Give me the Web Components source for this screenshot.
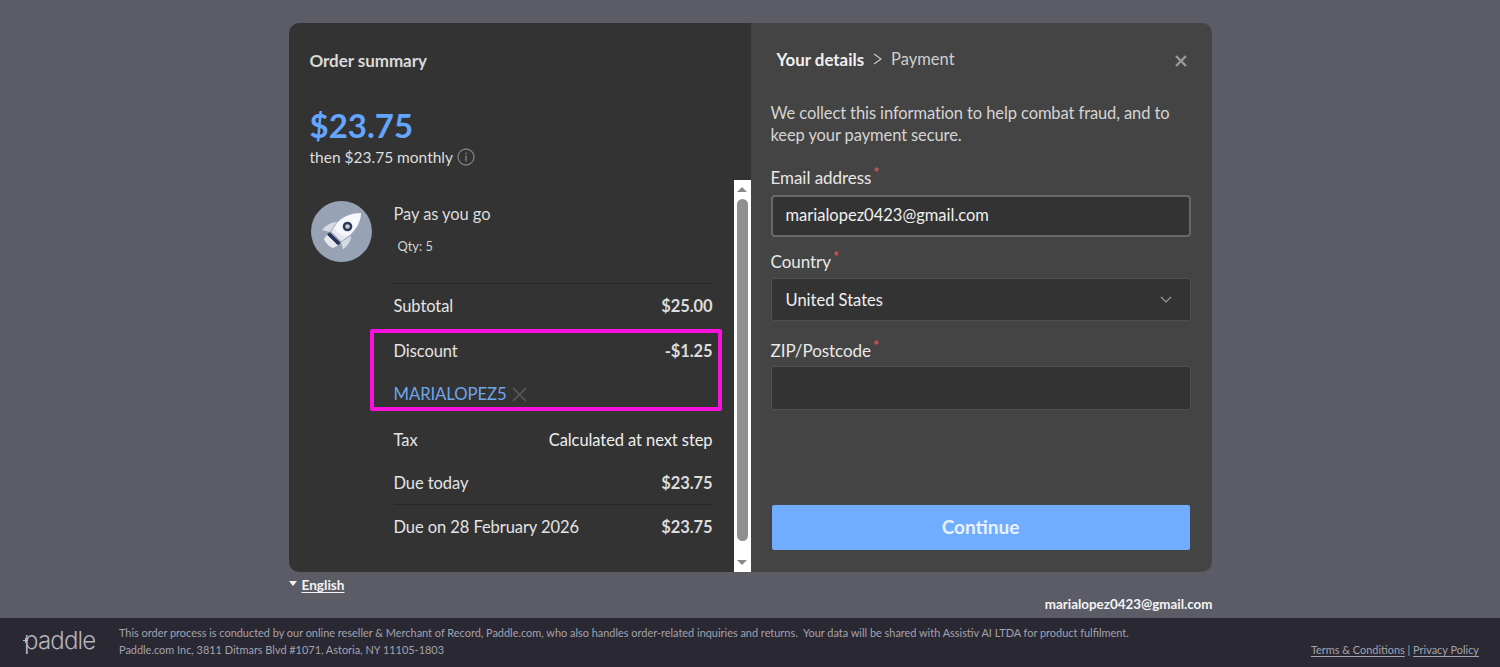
<!DOCTYPE html>
<html lang="en"><head><meta charset="utf-8"><title>Checkout</title>
<style>
html,body{margin:0;padding:0;height:100%;overflow:hidden}
body{font-family:Lato,"Liberation Sans",sans-serif;background:#5c5c66;color:#e8e8e8}
</style></head><body>
<checkout-page>
  <checkout-modal>
    <order-summary slot="left"></order-summary>
    <details-form slot="right"></details-form>
  </checkout-modal>
</checkout-page>
<site-footer></site-footer>
<script>
function el(name, css, html){
  customElements.define(name, class extends HTMLElement{
    constructor(){super();this.attachShadow({mode:'open'}).innerHTML='<style>'+css+'</style>'+html;}
  });
}
el('checkout-page',`
:host{display:flex;flex-direction:column;align-items:center;height:618px;box-sizing:border-box;padding-top:23px}
.under{width:923px;display:flex;flex-direction:column}
.lang{display:flex;align-items:center;gap:5px;height:26px;font-size:13.6px;font-weight:700;color:#f2f2f2}
.lang i{width:0;height:0;border-left:4.5px solid transparent;border-right:4.5px solid transparent;border-top:5px solid #f2f2f2;margin-top:-3px}
.lang u{text-underline-offset:2px}
.mail{text-align:right;font-size:13.4px;font-weight:700;color:#f4f4f4;line-height:16px;margin:-2px -1px 0 0}
`,`<slot></slot><div class="under"><div class="lang"><i></i><u>English</u></div><div class="mail">marialopez0423@gmail.com</div></div>`);

el('checkout-modal',`
:host{display:flex;width:923px;height:549px;border-radius:10px;overflow:hidden;flex:none}
::slotted([slot=left]){width:462px;flex:none}
::slotted([slot=right]){flex:1;min-width:0}
`,`<slot name="left"></slot><slot name="right"></slot>`);

el('scroll-bar',`
:host{display:flex;flex-direction:column;align-items:center;width:17px;flex:none;background:#fff}
.up,.down{height:19px;flex:none;display:flex;align-items:center;justify-content:center}
.up i{width:0;height:0;border-left:5px solid transparent;border-right:5px solid transparent;border-bottom:5px solid #8a8a8a}
.down i{width:0;height:0;border-left:5px solid transparent;border-right:5px solid transparent;border-top:5px solid #8a8a8a}
.track{flex:1;width:100%;display:flex;justify-content:center}
.thumb{width:11px;height:342px;background:#8f8f8f;border-radius:6px}
`,`<div class="up"><i></i></div><div class="track"><div class="thumb"></div></div><div class="down"><i></i></div>`);

el('price-row',`
:host{display:flex;justify-content:space-between;align-items:center;box-sizing:border-box;height:var(--row,44px);font-size:16.5px;letter-spacing:-.08px;color:#e4e4e4}
.v{color:#eeeeee}
:host([strong]) .v{font-weight:700;color:#dcdcdc}
:host([line]){border-top:1px solid #262626}
`,`<span><slot name="label"></slot></span><span class="v"><slot name="value"></slot></span>`);

el('rocket-badge',`
:host{display:block;width:61px;height:61px;flex:none}
svg{display:block}
`,`<svg width="61" height="61" viewBox="0 0 61 61" aria-hidden="true">
<circle cx="30.5" cy="30.5" r="30.5" fill="#98a2b5"/>
<path d="M26 21 C20 21 14 25 11 29 L19 31 Z" fill="#d6dae1"/>
<path d="M40 35 C40 41 36 45 32 48.5 L30 41 Z" fill="#d6dae1"/>
<path d="M50 12 C41 12 32 15 26 22 L20.5 30.5 L30 40 L39 34 C45 28 50 21 50 12 Z" fill="#f6f7fa"/>
<path d="M20.5 30.5 L30 40 L39 34 C34 36 27 33 23.5 27.5 Z" fill="#e5e8ee"/>
<circle cx="36.5" cy="25.5" r="4.8" fill="#2d3a5c"/><circle cx="36.5" cy="25.5" r="2.3" fill="#c6ccd8"/>
<path d="M18.5 31.2 L29.5 41.8 L27 44.5 L16 33.8 Z" fill="#27345a"/>
<path d="M16 33.8 L27 44.5 L22 47 C18.5 46 14.5 42 13 38 Z" fill="#e6e8ee"/>
</svg>`);

el('highlight-box',`
:host{position:absolute;left:-24px;right:-9px;top:0;bottom:5px;border:4px solid #fb10dc;border-radius:2px;pointer-events:none;box-sizing:border-box}
`,``);

el('order-summary',`
:host{display:flex;flex-direction:column;background:#333333;height:549px;color:#e4e4e4}
.head{height:157px;flex:none;box-sizing:border-box;padding:27px 21px 0}
h2{margin:0;font-size:17px;line-height:22px;font-weight:700;letter-spacing:-.05px;color:#d9d9d9}
.price{margin-top:31px;font-size:33px;line-height:44px;font-weight:700;color:#64a6ff}
.then{display:flex;align-items:center;gap:4px;font-size:15.5px;line-height:22px;margin-top:-1px;color:#dedede}
.scroll{flex:1;display:flex;min-height:0}
.content{flex:1;min-width:0;box-sizing:border-box;padding:21px 21px 0 22px;display:flex;gap:22px}
.rows{flex:1;min-width:0}
.prod{height:82px;box-sizing:border-box;padding-top:2px}
.pname{font-size:16.5px;letter-spacing:-.08px;line-height:22px;color:#dcdcdc}
.qty{font-size:12.8px;line-height:18px;margin:12px 0 0 4px;color:#d4d4d4}
.disc{position:relative;margin-top:2px}
.code{display:flex;align-items:center;gap:5px;box-sizing:border-box;height:44px;margin-top:-1px;font-size:16.7px;letter-spacing:-.08px;color:#6ea6ec}
.tax{margin-top:2px}
.today{margin-top:-1px;--row:43px}
`,`<div class="head"><h2>Order summary</h2><div class="price">$23.75</div>
<div class="then"><span>then $23.75 monthly</span>
<svg width="18" height="18" viewBox="0 0 18 18" aria-hidden="true"><circle cx="9" cy="9" r="8" fill="none" stroke="#808080" stroke-width="1.3"/><rect x="8.3" y="7.5" width="1.4" height="6" fill="#808080"/><rect x="8.3" y="4.6" width="1.4" height="1.6" fill="#808080"/></svg></div></div>
<div class="scroll"><div class="content"><rocket-badge></rocket-badge><div class="rows">
<div class="prod"><div class="pname">Pay as you go</div><div class="qty">Qty: 5</div></div>
<price-row line strong><span slot="label">Subtotal</span><span slot="value">$25.00</span></price-row>
<div class="disc"><highlight-box></highlight-box>
<price-row strong><span slot="label">Discount</span><span slot="value">-$1.25</span></price-row>
<div class="code"><span>MARIALOPEZ5</span><svg width="15" height="15" viewBox="0 0 15 15" aria-hidden="true"><path d="M1 1 L14 14 M14 1 L1 14" stroke="#585858" stroke-width="1.7" fill="none"/></svg></div>
</div>
<price-row class="tax"><span slot="label">Tax</span><span slot="value">Calculated at next step</span></price-row>
<price-row class="today" strong><span slot="label">Due today</span><span slot="value">$23.75</span></price-row>
<price-row line strong><span slot="label">Due on 28 February 2026</span><span slot="value">$23.75</span></price-row>
</div></div><scroll-bar></scroll-bar></div>`);

el('form-field',`
:host{display:block}
label{display:block;font-size:17px;letter-spacing:-.05px;line-height:22px;color:#e8e8e8}
sup{color:#e0606e;font-size:15px;line-height:0;vertical-align:baseline;position:relative;top:-6px;margin-left:2px}
.box{display:flex;align-items:center;justify-content:space-between;box-sizing:border-box;height:var(--h,44px);background:#333333;border:1px solid #4f4f4f;border-radius:3px;padding:0 14px;font-size:16.5px;color:#f0f0f0;margin-top:var(--gap,6px)}
:host([focus]) .box{border:2px solid #686868;padding:0 13px 2px;border-radius:4px}
`,`<label><slot name="label"></slot><sup>*</sup></label><div class="box"><span><slot></slot></span><slot name="end"></slot></div>`);

el('details-form',`
:host{display:flex;flex-direction:column;background:#444444;height:549px;box-sizing:border-box;padding:0 21px 22px 20px;color:#e0e0e0}
.crumbs{display:flex;align-items:center;height:36px;margin-top:18px;padding-left:6px;font-size:16.5px}
.crumbs b{font-weight:700;font-size:16.9px;color:#f0f0f0}
.crumbs svg{margin:0 9px}
.crumbs span{color:#cfcfcf}
.close{margin-left:auto;margin-right:4px;margin-top:4px;display:flex}
.close svg{margin:0}
p{margin:25px 0 0;font-size:16.5px;letter-spacing:-.1px;line-height:22px;color:#d4d4d4}
.f1{margin-top:21px;--gap:6px;--h:42px}.f2{margin-top:14px;--gap:5px;--h:43px}.f3{margin-top:19px;--gap:4px}
button{margin:auto 1px 0;height:45px;border:0;border-radius:2px;background:#70adff;color:#e9f1fc;font:700 19px Lato,"Liberation Sans",sans-serif;padding:0 0 2px}
`,`<div class="crumbs"><b>Your details</b><svg width="9" height="12" viewBox="0 0 9 12" aria-hidden="true"><path d="M1 1 L8 6 L1 11" fill="none" stroke="#c8c8c8" stroke-width="1.2"/></svg><span>Payment</span>
<div class="close"><svg width="12" height="12" viewBox="0 0 12 12" aria-hidden="true"><path d="M1 1 L11 11 M11 1 L1 11" stroke="#9a9a9a" stroke-width="2.4" fill="none"/></svg></div></div>
<p>We collect this information to help combat fraud, and to keep your payment secure.</p>
<form-field class="f1" focus><span slot="label">Email address</span>marialopez0423@gmail.com</form-field>
<form-field class="f2"><span slot="label">Country</span>United States<svg slot="end" style="margin-right:4px" width="12" height="7" viewBox="0 0 12 7" aria-hidden="true"><path d="M1 1 L6 6 L11 1" fill="none" stroke="#9a9a9a" stroke-width="1.2"/></svg></form-field>
<form-field class="f3"><span slot="label">ZIP/Postcode</span></form-field>
<button>Continue</button>`);

el('site-footer',`
:host{display:flex;height:49px;background:#2a2833;color:#a3a3ad;font-size:10.93px;box-sizing:border-box;padding:0 21px 0 24px;align-items:stretch}
.logo{width:95px;flex:none;display:flex;align-items:center;font-family:Inter,Lato,sans-serif;font-size:24px;font-weight:300;letter-spacing:-.8px;color:#b4b4ba;line-height:1;position:relative;top:-2px}
.logo svg{position:absolute;left:-1px;top:22px}
.txt{flex:1;line-height:17px;padding-top:6px}
.links{align-self:flex-end;line-height:17px;padding-bottom:9px;white-space:nowrap}
u{text-underline-offset:2px}
`,`<div class="logo">paddle<svg width="5" height="5" viewBox="0 0 5 5" aria-hidden="true"><path d="M0 2.5 H5 M2.5 0 V5" stroke="#bcbcc2" stroke-width="1"/></svg></div><div class="txt">This order process is conducted by our online reseller &amp; Merchant of Record, Paddle.com, who also handles order-related inquiries and returns.&nbsp; Your data will be shared with Assistiv AI LTDA for product fulfilment.<br>Paddle.com Inc, 3811 Ditmars Blvd #1071, Astoria, NY 11105-1803</div><div class="links"><u>Terms &amp; Conditions</u> | <u>Privacy Policy</u></div>`);
</script>
</body></html>
